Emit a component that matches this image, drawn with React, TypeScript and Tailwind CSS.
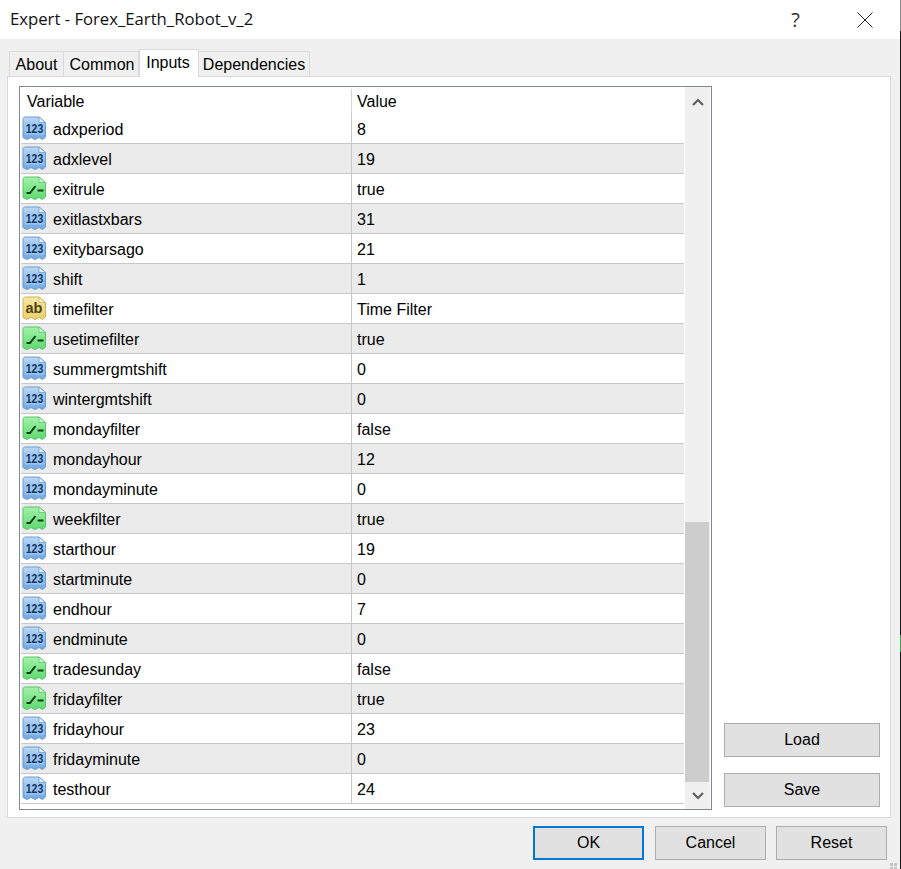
import React from 'react';

type Kind = 'num' | 'bool' | 'str';

const rows: [Kind, string, string][] = [
  ['num', 'adxperiod', '8'],
  ['num', 'adxlevel', '19'],
  ['bool', 'exitrule', 'true'],
  ['num', 'exitlastxbars', '31'],
  ['num', 'exitybarsago', '21'],
  ['num', 'shift', '1'],
  ['str', 'timefilter', 'Time Filter'],
  ['bool', 'usetimefilter', 'true'],
  ['num', 'summergmtshift', '0'],
  ['num', 'wintergmtshift', '0'],
  ['bool', 'mondayfilter', 'false'],
  ['num', 'mondayhour', '12'],
  ['num', 'mondayminute', '0'],
  ['bool', 'weekfilter', 'true'],
  ['num', 'starthour', '19'],
  ['num', 'startminute', '0'],
  ['num', 'endhour', '7'],
  ['num', 'endminute', '0'],
  ['bool', 'tradesunday', 'false'],
  ['bool', 'fridayfilter', 'true'],
  ['num', 'fridayhour', '23'],
  ['num', 'fridayminute', '0'],
  ['num', 'testhour', '24'],
];

const palette = {
  num: { light: '#bcd8f4', dark: '#6ea6e0', edge: '#6a9fd4', fold: '#e6f0fa' },
  bool: { light: '#a4f2a8', dark: '#5ed870', edge: '#58c46a', fold: '#dcf8dc' },
  str: { light: '#f6e8a4', dark: '#ead06a', edge: '#ccb45c', fold: '#fbf3cc' },
};

const DOC = 'M2.5 1 H17 L23.5 6.5 V21 L20.5 23.5 L17 21.5 L13 23.5 L9 21.5 L5 23.5 L1 21.5 V2.5 Z';

const TypeIcon: React.FC<{ kind: Kind }> = ({ kind }) => {
  const c = palette[kind];
  const gradId = `grad-${kind}`;
  return (
    <svg width="25" height="25" viewBox="0 0 25 25" className="-mt-px shrink-0">
      <defs>
        <linearGradient id={gradId} x1="0" y1="0" x2="0" y2="1">
          <stop offset="0" stopColor={c.light} />
          <stop offset="1" stopColor={c.dark} />
        </linearGradient>
      </defs>
      <path d={DOC} fill={`url(#${gradId})`} stroke={c.edge} strokeWidth="1" />
      <path d="M17 1 V6.5 H23.5 Z" fill={c.fold} stroke={c.edge} strokeWidth="0.8" />
      {kind === 'num' && (
        <>
          <rect x="3" y="7.5" width="19" height="11" fill="#9cc4ee" />
          <text x="12.5" y="14.3" transform="scale(1 1.2)" textAnchor="middle" fontSize="10.5" fontWeight="700" fontFamily="'Liberation Sans', sans-serif" fill="#0e3562">123</text>
        </>
      )}
      {kind === 'str' && (
        <text x="12" y="17" textAnchor="middle" fontSize="14.5" fontWeight="700" fontFamily="'Liberation Sans', sans-serif" fill="#4a3f10">ab</text>
      )}
      {kind === 'bool' && (
        <>
          <path d="M4.5 17 L8 17 L13.5 10" fill="none" stroke="#0c3c14" strokeWidth="2" />
          <path d="M15.5 14.5 L21.5 14.5" fill="none" stroke="#0c3c14" strokeWidth="2" />
        </>
      )}
    </svg>
  );
};

const Tab: React.FC<{ label: string; active?: boolean; width: string }> = ({ label, active, width }) => (
  <div
    className={
      active
        ? `${width} relative z-10 -mb-px flex h-[28px] items-center justify-center border border-b-0 border-[#d9d9d9] bg-white pb-px pr-[2px]`
        : `${width} flex h-[25px] items-center justify-center border border-l-0 border-b-0 border-[#d9d9d9] bg-[#f0f0f0] pt-[2px] first:border-l`
    }
  >
    {label}
  </div>
);

const Btn: React.FC<{ label: string; width: string; primary?: boolean }> = ({ label, width, primary }) => (
  <div
    className={`${width} flex h-[34px] items-center justify-center bg-[#e1e1e1] ${
      primary ? 'mr-px border-2 border-[#0078d7]' : 'border border-[#adadad]'
    }`}
  >
    {label}
  </div>
);

export default function App() {
  return (
    <div className="relative flex h-[869px] w-[901px] overflow-hidden bg-[#f0f0f0] font-['Liberation_Sans',Arial,sans-serif] text-[16px] leading-none text-black">
      <div className="flex w-[900px] shrink-0 flex-col">
        {/* title bar */}
        <div className="flex h-[39px] shrink-0 items-center bg-white pl-[10px]">
          <span className="flex-1 font-['Open_Sans',sans-serif] text-[16.7px] text-[#111]">Expert - Forex_Earth_Robot_v_2</span>
          <span className="mr-[57px] font-['Open_Sans',sans-serif] text-[20px] text-[#333]">?</span>
          <svg width="16" height="16" viewBox="0 0 16 16" className="mr-[27px]">
            <path d="M0.5 0.5 L15.5 15.5 M15.5 0.5 L0.5 15.5" stroke="#222" strokeWidth="1" fill="none" />
          </svg>
        </div>

        {/* tabs */}
        <div className="flex h-[37px] shrink-0 items-end pl-[9px] pr-[10px]">
          <Tab label="About" width="w-[55px]" />
          <Tab label="Common" width="w-[75px] pl-[2px]" />
          <Tab label="Inputs" width="w-[60px]" active />
          <Tab label="Dependencies" width="w-[111px]" />
        </div>

        {/* panel */}
        <div className="ml-[7px] flex h-[742px] w-[884px] shrink-0 border border-[#d9d9d9] bg-white pl-[11px] pr-[9px] pt-[9px]">
          {/* list */}
          <div className="flex h-[724px] w-[693px] shrink-0 border border-[#828790] bg-white">
            <div className="flex w-[664px] shrink-0 flex-col">
              <div className="flex h-[27px] shrink-0 items-center pt-[2px]">
                <div className="w-[331px] pl-[7px]">Variable</div>
                <div className="h-full border-l border-[#d5d5d5] pl-[5px] pt-[5px]">Value</div>
              </div>
              {rows.map(([kind, name, value], i) => (
                <div
                  key={name}
                  className={`ml-px flex h-[30px] shrink-0 items-center border-b border-[#c8c8c8] ${
                    i % 2 === 1 ? 'bg-[#ebebeb]' : 'bg-white'
                  }`}
                >
                  <div className="flex h-full w-[330px] shrink-0 items-center gap-[6px] pl-px">
                    <TypeIcon kind={kind} />
                    <span className="pt-[2px]">{name}</span>
                  </div>
                  <div className="flex h-full items-center border-l border-[#c8c8c8] pl-[5px] pt-[2px]">{value}</div>
                </div>
              ))}
            </div>

            {/* scrollbar */}
            <div className="ml-px flex h-full w-[25px] shrink-0 flex-col bg-[#f0f0f0]">
              <div className="flex h-[29px] shrink-0 items-center justify-center">
                <svg width="12" height="8" viewBox="0 0 12 8">
                  <path d="M1 7 L6 2 L11 7" fill="none" stroke="#606060" strokeWidth="2.2" />
                </svg>
              </div>
              <div className="h-[406px] shrink-0" />
              <div className="mr-px h-[260px] shrink-0 bg-[#cdcdcd]" />
              <div className="flex flex-1 items-center justify-center">
                <svg width="12" height="8" viewBox="0 0 12 8">
                  <path d="M1 1 L6 6 L11 1" fill="none" stroke="#606060" strokeWidth="2.2" />
                </svg>
              </div>
            </div>
          </div>

          {/* load / save */}
          <div className="ml-[12px] flex h-[721px] flex-1 flex-col justify-end gap-[16px]">
            <Btn label="Load" width="w-[156px]" />
            <Btn label="Save" width="w-[156px]" />
          </div>
        </div>

        {/* bottom buttons */}
        <div className="flex flex-1 justify-end gap-[10px] pr-[13px] pt-[8px]">
          <Btn label="OK" width="w-[111px]" primary />
          <Btn label="Cancel" width="w-[111px]" />
          <Btn label="Reset" width="w-[111px]" />
        </div>
      </div>

      {/* sliver of the window behind */}
      <div className="flex w-px shrink-0 flex-col bg-[#161616]">
        <div className="h-[31px] bg-[#8a8a8a]" />
        <div className="mt-[604px] h-[17px] bg-[#2aa84a]" />
      </div>

      {/* size grip */}
      <div className="absolute left-[890px] top-[863px] grid grid-cols-2 gap-px">
        <div className="h-[3px] w-[3px] bg-[#c4c4c4]" />
        <div className="h-[3px] w-[3px] bg-[#c4c4c4]" />
        <div className="h-[3px] w-[3px] bg-[#c4c4c4]" />
        <div className="h-[3px] w-[3px] bg-[#c4c4c4]" />
      </div>
    </div>
  );
}
